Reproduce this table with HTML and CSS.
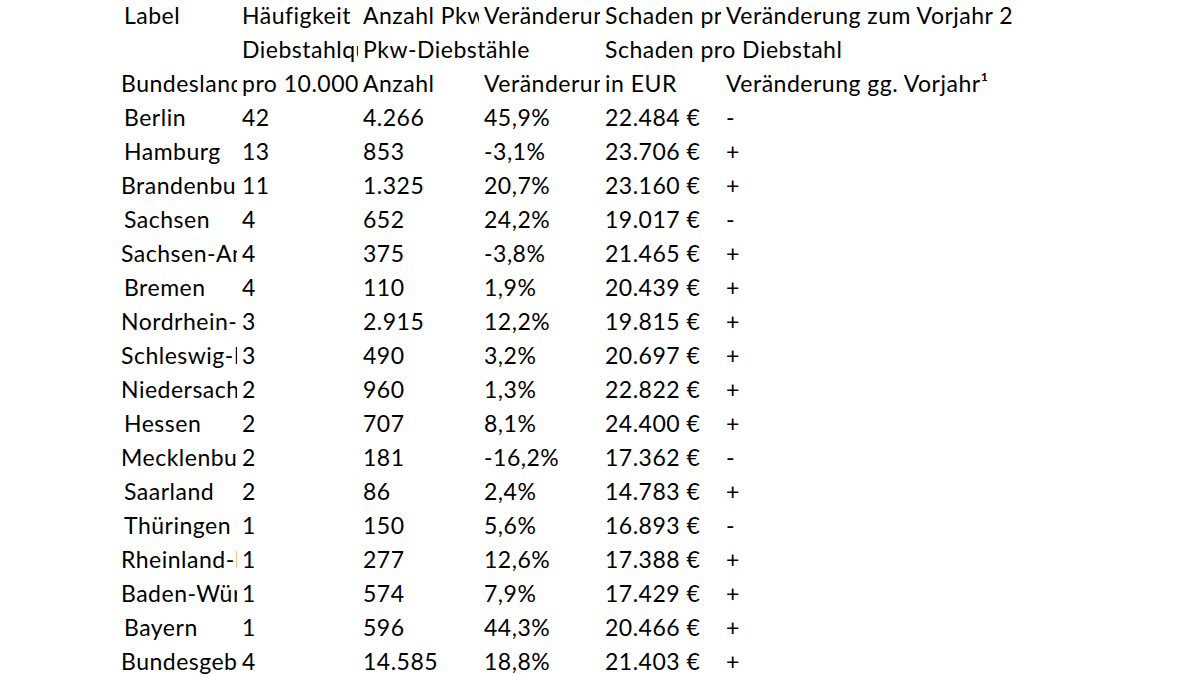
FILE: index.html
```html
<!DOCTYPE html>
<html lang="de">
<head>
<meta charset="utf-8">
<title>Pkw-Diebstähle</title>
<link rel="stylesheet" href="styles.css">
</head>
<body>
<div class="sheet">
  <div class="c ind">Label</div><div class="c">Häufigkeit Pkw-Diebstahl</div><div class="c">Anzahl Pkw-Diebstähle</div><div class="c">Veränderung Anzahl</div><div class="c">Schaden pro Diebstahl</div><div class="c">Veränderung zum Vorjahr 2</div>
  <div class="c"></div><div class="c">Diebstahlquote</div><div class="c spill">Pkw-Diebstähle</div><div class="c"></div><div class="c spill">Schaden pro Diebstahl</div><div class="c"></div>
  <div class="c">Bundesland</div><div class="c">pro 10.000 Fahrzeuge</div><div class="c">Anzahl</div><div class="c">Veränderung</div><div class="c">in EUR</div><div class="c">Veränderung gg. Vorjahr¹</div>

  <div class="c ind">Berlin</div><div class="c">42</div><div class="c">4.266</div><div class="c">45,9%</div><div class="c">22.484 €</div><div class="c">-</div>
  <div class="c ind">Hamburg</div><div class="c">13</div><div class="c">853</div><div class="c">-3,1%</div><div class="c">23.706 €</div><div class="c">+</div>
  <div class="c">Brandenburg</div><div class="c">11</div><div class="c">1.325</div><div class="c">20,7%</div><div class="c">23.160 €</div><div class="c">+</div>
  <div class="c ind">Sachsen</div><div class="c">4</div><div class="c">652</div><div class="c">24,2%</div><div class="c">19.017 €</div><div class="c">-</div>
  <div class="c">Sachsen-Anhalt</div><div class="c">4</div><div class="c">375</div><div class="c">-3,8%</div><div class="c">21.465 €</div><div class="c">+</div>
  <div class="c ind">Bremen</div><div class="c">4</div><div class="c">110</div><div class="c">1,9%</div><div class="c">20.439 €</div><div class="c">+</div>
  <div class="c">Nordrhein-Westfalen</div><div class="c">3</div><div class="c">2.915</div><div class="c">12,2%</div><div class="c">19.815 €</div><div class="c">+</div>
  <div class="c">Schleswig-Holstein</div><div class="c">3</div><div class="c">490</div><div class="c">3,2%</div><div class="c">20.697 €</div><div class="c">+</div>
  <div class="c">Niedersachsen</div><div class="c">2</div><div class="c">960</div><div class="c">1,3%</div><div class="c">22.822 €</div><div class="c">+</div>
  <div class="c ind">Hessen</div><div class="c">2</div><div class="c">707</div><div class="c">8,1%</div><div class="c">24.400 €</div><div class="c">+</div>
  <div class="c">Mecklenburg-Vorpommern</div><div class="c">2</div><div class="c">181</div><div class="c">-16,2%</div><div class="c">17.362 €</div><div class="c">-</div>
  <div class="c ind">Saarland</div><div class="c">2</div><div class="c">86</div><div class="c">2,4%</div><div class="c">14.783 €</div><div class="c">+</div>
  <div class="c ind">Thüringen</div><div class="c">1</div><div class="c">150</div><div class="c">5,6%</div><div class="c">16.893 €</div><div class="c">-</div>
  <div class="c">Rheinland-Pfalz</div><div class="c">1</div><div class="c">277</div><div class="c">12,6%</div><div class="c">17.388 €</div><div class="c">+</div>
  <div class="c">Baden-Württemberg</div><div class="c">1</div><div class="c">574</div><div class="c">7,9%</div><div class="c">17.429 €</div><div class="c">+</div>
  <div class="c ind">Bayern</div><div class="c">1</div><div class="c">596</div><div class="c">44,3%</div><div class="c">20.466 €</div><div class="c">+</div>
  <div class="c">Bundesgebiet</div><div class="c">4</div><div class="c">14.585</div><div class="c">18,8%</div><div class="c">21.403 €</div><div class="c">+</div>
</div>
</body>
</html>
```

FILE: styles.css
```css
html, body {
  margin: 0;
  padding: 0;
  background: #ffffff;
}

body {
  font-family: Lato, "Liberation Sans", sans-serif;
  font-size: 23px;
  letter-spacing: 0.5px;
  color: #000000;
  overflow: hidden;
}

.sheet {
  display: grid;
  grid-template-columns: 118px 118px 118px 118px 118px auto;
  column-gap: 3px;
  grid-auto-rows: 34px;
  margin-left: 119px;
  margin-top: -2px;
}

.c {
  white-space: nowrap;
  overflow: hidden;
  padding-left: 2px;
  line-height: 34px;
}

.c.ind {
  padding-left: 5px;
}

.c.spill {
  overflow: visible;
}
```
